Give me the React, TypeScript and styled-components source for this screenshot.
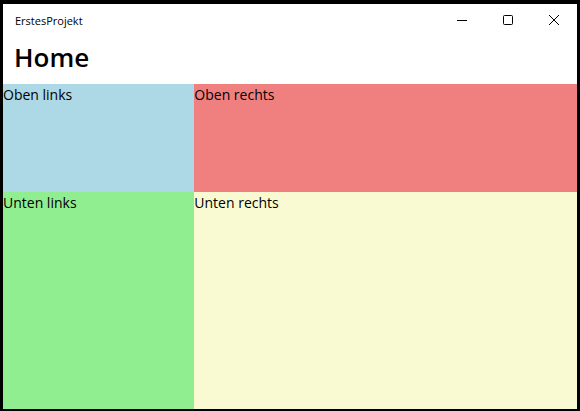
import React from "react";
import styled, { createGlobalStyle } from "styled-components";

const Global = createGlobalStyle`
  html, body { margin: 0; padding: 0; background: #000; }
  body { font-family: "Open Sans", "Noto Sans", sans-serif; }
`;

const Window = styled.div`
  box-sizing: border-box;
  width: 580px;
  height: 411px;
  border-style: solid;
  border-color: #000;
  border-width: 4px 3px 2px 3px;
  background: #fff;
  display: flex;
  flex-direction: column;
`;

const TitleBar = styled.div`
  height: 32px;
  display: flex;
  align-items: center;
`;

const Title = styled.div`
  flex: 1;
  padding-left: 12px;
  font-size: 11px;
  color: #000;
  font-family: "Open Sans", sans-serif;
`;

const Caption = styled.div`
  width: 46px;
  height: 32px;
  display: flex;
  align-items: center;
  justify-content: center;
`;

const Header = styled.h1`
  margin: 0;
  height: 48px;
  box-sizing: border-box;
  padding: 0 0 6px 11px;
  font-size: 26px;
  font-weight: 600;
  line-height: 42px;
  color: #000;
  font-family: "Open Sans", sans-serif;
`;

const Grid = styled.div`
  flex: 1;
  display: grid;
  grid-template-columns: 1fr 2fr;
  grid-template-rows: 1fr 2fr;
`;

const Cell = styled.div<{ $bg: string }>`
  background: ${(p) => p.$bg};
  font-size: 14px;
  line-height: 20px;
  color: #000;
  padding: 1px 0 0 0;
  font-family: "Open Sans", sans-serif;
`;

export default function App() {
  return (
    <>
      <Global />
      <Window>
        <TitleBar>
          <Title>ErstesProjekt</Title>
          <Caption>
            <svg width="10" height="10" viewBox="0 0 10 10">
              <path d="M0 5.5H10" stroke="#000" strokeWidth="1" />
            </svg>
          </Caption>
          <Caption>
            <svg width="10" height="10" viewBox="0 0 10 10">
              <rect x="0.5" y="0.5" width="9" height="9" rx="1" fill="none" stroke="#000" strokeWidth="1" />
            </svg>
          </Caption>
          <Caption>
            <svg width="10" height="10" viewBox="0 0 10 10">
              <path d="M0 0L10 10M10 0L0 10" stroke="#000" strokeWidth="1" />
            </svg>
          </Caption>
        </TitleBar>
        <Header>Home</Header>
        <Grid>
          <Cell $bg="#ADD8E6">Oben links</Cell>
          <Cell $bg="#F08080">Oben rechts</Cell>
          <Cell $bg="#90EE90">Unten links</Cell>
          <Cell $bg="#FAFAD2">Unten rechts</Cell>
        </Grid>
      </Window>
    </>
  );
}
